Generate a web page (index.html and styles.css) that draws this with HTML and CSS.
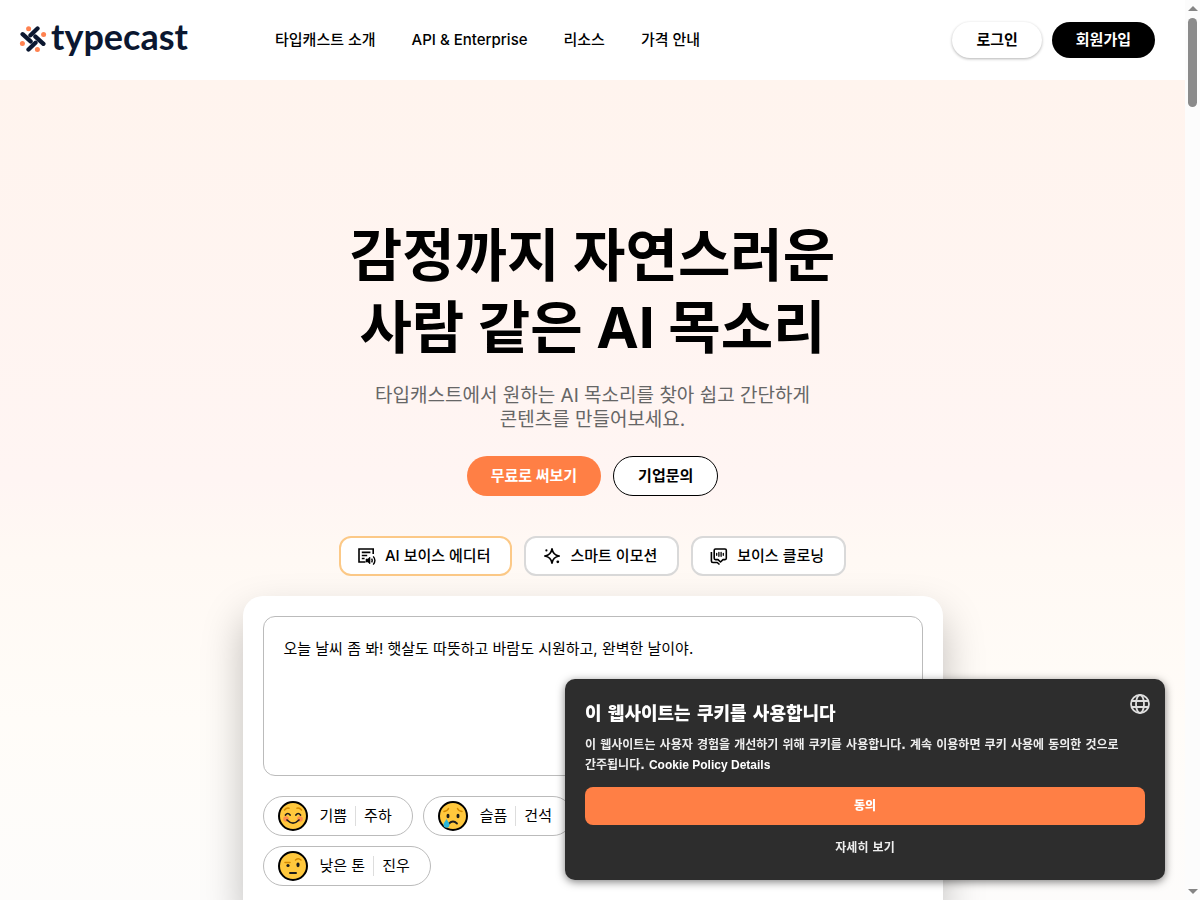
FILE: index.html
```html
<!DOCTYPE html>
<html lang="ko">
<head>
  <meta charset="UTF-8" />
  <meta name="viewport" content="width=device-width, initial-scale=1" />
  <title>typecast</title>
  <link rel="stylesheet" href="styles.css">
</head>
<body>
  <div class="page">
    <header class="header">
      <a class="logo" href="#">
        <svg width="28" height="28" viewBox="0 0 28 28" aria-hidden="true">
          <g stroke="#0b1730" stroke-width="4.3" stroke-linecap="round">
            <path d="M3.6 8.200l8 7.200M18.500 2.500l-7 6.700M16.400 10.600l8 7.200M9.500 23.500l7-6.700"/>
          </g>
          <g fill="#ff8250">
            <circle cx="9.600" cy="2.800" r="2.500"/>
            <circle cx="24.600" cy="8.500" r="2.500"/>
            <circle cx="3.400" cy="17.500" r="2.500"/>
            <circle cx="18.400" cy="23.500" r="2.500"/>
          </g>
        </svg>
        <span>typecast</span>
      </a>
      <nav class="nav">
        <a href="#">타입캐스트 소개</a>
        <a href="#">API &amp; Enterprise</a>
        <a href="#">리소스</a>
        <a href="#">가격 안내</a>
      </nav>
      <div class="account">
        <button class="login">로그인</button>
        <button class="signup">회원가입</button>
      </div>
    </header>

    <main class="hero">
      <h1>감정까지 자연스러운<br>사람 같은 AI 목소리</h1>
      <p class="lead">타입캐스트에서 원하는 AI 목소리를 찾아 쉽고 간단하게<br>콘텐츠를 만들어보세요.</p>
      <div class="actions">
        <button class="primary">무료로 써보기</button>
        <button class="outline">기업문의</button>
      </div>

      <div class="tabs">
        <button class="tab active">
          <svg width="20" height="20" viewBox="0 0 20 20" fill="none" stroke="#000" stroke-width="1.6" aria-hidden="true">
            <path d="M16.200 8V3H2v13h6.500M4.800 6.400h8.600M4.800 9.500h5.400M4.800 12.500h2.800"/>
            <path d="M9 13h1.800l2.200-1.900v6.800L10.800 16H9z" fill="#000" stroke-width=".6"/>
            <path d="M14.600 12.600q1.200 1.900 0 3.800M16.200 10.400q3.400 4.100 0 8.200" stroke-width="1.400"/>
          </svg>
          AI 보이스 에디터
        </button>
        <button class="tab">
          <svg width="20" height="20" viewBox="0 0 20 20" fill="none" stroke="#000" stroke-width="1.7" stroke-linejoin="round" aria-hidden="true">
            <path d="M10 2.800Q11 9 17.200 10 11 11 10 17.200 9 11 2.800 10 9 9 10 2.800z"/>
            <circle cx="4.400" cy="4.400" r="1.100" fill="#000" stroke="none"/>
            <circle cx="15.800" cy="15.800" r="1.400" fill="#000" stroke="none"/>
          </svg>
          스마트 이모션
        </button>
        <button class="tab">
          <svg width="20" height="20" viewBox="0 0 20 20" fill="none" stroke="#000" stroke-width="1.6" stroke-linejoin="round" aria-hidden="true">
            <path d="M6.500 3H16q1.300 0 1.300 1.300v8q0 1.300-1.300 1.300h-2L11.500 16 9 13.600H6.500q-1.300 0-1.300-1.300v-8Q5.200 3 6.500 3z"/>
            <path d="M2.400 6v9q0 1.500 1.500 1.500h4.300l2.300 2"/>
            <path d="M7.700 7.300v2M9.900 6.400v3.900M12.100 6.400v3.900M14.300 7.300v2" stroke-width="1.300" stroke-linecap="round"/>
          </svg>
          보이스 클로닝
        </button>
      </div>

      <section class="editor">
        <textarea class="script" aria-label="대본">오늘 날씨 좀 봐! 햇살도 따뜻하고 바람도 시원하고, 완벽한 날이야.</textarea>
        <div class="voices">
          <button class="voice">
            <svg width="30" height="30" viewBox="0 0 30 30" fill="none" stroke-linecap="round" aria-hidden="true">
              <circle cx="15" cy="15" r="14" fill="#ffc83d" stroke="#000" stroke-width="2"/>
              <circle cx="8" cy="18" r="2.800" fill="#ff8d4d"/>
              <circle cx="22" cy="18" r="2.800" fill="#ff8d4d"/>
              <path d="M6.500 9q2-2.500 4.500-1.800M19 7.200q2.500-.700 4.500 1.800" stroke="#d68a00" stroke-width="1.500"/>
              <path d="M7.500 14q2.300-3 4.600 0M17.900 14q2.300-3 4.600 0M9 19q6 6 12 0" stroke="#1c1c1c" stroke-width="1.700"/>
            </svg>
            <span>기쁨</span><span class="name">주하</span>
          </button>
          <button class="voice">
            <svg width="30" height="30" viewBox="0 0 30 30" fill="none" stroke-linecap="round" aria-hidden="true">
              <circle cx="15" cy="15" r="14" fill="#ffc83d" stroke="#000" stroke-width="2"/>
              <path d="M6 10.500q3.500-.500 4.500-3M19.500 7.500q1 2.500 4.500 3" stroke="#d68a00" stroke-width="1.500"/>
              <ellipse cx="10" cy="15" rx="1.500" ry="2.200" fill="#1c1c1c"/>
              <ellipse cx="20" cy="15" rx="1.500" ry="2.200" fill="#1c1c1c"/>
              <path d="M11 22.500q4-4 8 0" stroke="#1c1c1c" stroke-width="1.800"/>
              <path d="M8.500 18c-1 2.400-3 3.500-3 5.700a3 3 0 0 0 6 0c0-2.200-2-3.300-3-5.700z" fill="#29b6d8"/>
            </svg>
            <span>슬픔</span><span class="name">건석</span>
          </button>
          <button class="voice">
            <svg width="30" height="30" viewBox="0 0 30 30" fill="none" stroke-linecap="round" aria-hidden="true">
              <circle cx="15" cy="15" r="14" fill="#ffc83d" stroke="#000" stroke-width="2"/>
              <path d="M7 11.500h5M17.500 9q3-2.500 5.500 0" stroke="#d68a00" stroke-width="1.500"/>
              <ellipse cx="10" cy="14.500" rx="1.600" ry="1.600" fill="#1c1c1c"/>
              <ellipse cx="20" cy="13.800" rx="1.600" ry="2.400" fill="#1c1c1c"/>
              <path d="M12 22h6" stroke="#1c1c1c" stroke-width="2"/>
            </svg>
            <span>낮은 톤</span><span class="name">진우</span>
          </button>
        </div>
      </section>
    </main>
  </div>

  <div class="scrollbar" aria-hidden="true">
    <span class="arrow up"></span>
    <span class="thumb"></span>
    <span class="arrow down"></span>
  </div>

  <section class="cookie" aria-labelledby="cookie-title">
    <button class="language" aria-label="언어">
      <svg width="20" height="20" viewBox="0 0 20 20" fill="none" stroke="#dedede" stroke-width="1.800" aria-hidden="true">
        <circle cx="10" cy="10" r="9"/>
        <ellipse cx="10" cy="10" rx="4" ry="9"/>
        <path d="M1.500 7h17M1.500 13h17"/>
      </svg>
    </button>
    <h2 id="cookie-title">이 웹사이트는 쿠키를 사용합니다</h2>
    <p>이 웹사이트는 사용자 경험을 개선하기 위해 쿠키를 사용합니다. 계속 이용하면 쿠키 사용에 동의한 것으로 간주됩니다. <a href="#">Cookie Policy Details</a></p>
    <button class="agree">동의</button>
    <button class="details">자세히 보기</button>
  </section>
</body>
</html>
```

FILE: styles.css
```css
* {
  margin: 0;
  padding: 0;
  box-sizing: border-box;
}
body {
  display: flex;
  height: 100vh;
  overflow: hidden;
  font-family: Inter, "Noto Sans CJK KR", sans-serif;
  font-size: 15px;
  line-height: 20px;
  color: #000;
  background: #fff;
}
button {
  border: 0;
  font: inherit;
  color: inherit;
  cursor: pointer;
}
a {
  color: inherit;
  text-decoration: none;
}
.page {
  flex: 1;
  min-width: 0;
}

/* HEADER */
.header {
  display: flex;
  align-items: center;
  height: 80px;
  padding: 0 30px 0 19px;
  background: #fff;
}
.logo {
  display: flex;
  align-items: center;
  gap: 4px;
  width: 256px;
  font: 700 36px/40px Lato, sans-serif;
  color: #0b1730;
}
.logo span {
  padding-bottom: 8px;
}
.nav {
  display: flex;
  gap: 36px;
  font-weight: 500;
}
.account {
  display: flex;
  gap: 10px;
  margin-left: auto;
  font-weight: 700;
}
.account button {
  height: 36px;
  padding: 0 24px;
  border-radius: 18px;
}
.login {
  background: #fff;
  box-shadow: 0 1px 3px rgba(0, 0, 0, 0.3);
}
.signup {
  color: #fff;
  background: #000;
}

/* HERO */
.hero {
  display: flex;
  flex-direction: column;
  align-items: center;
  padding: 140px 20px 0;
  background: linear-gradient(#fff4ee, #fff5f3 400px, #fff9f4 480px, #fffcf8 640px, #fdfcfb 820px);
}
h1 {
  font-size: 57px;
  line-height: 72px;
  font-weight: 700;
  text-align: center;
}
.lead {
  margin-top: 20px;
  font-size: 19px;
  line-height: 24px;
  color: #666;
  text-align: center;
}
.actions {
  display: flex;
  gap: 12px;
  margin-top: 24px;
  font-weight: 700;
}
.actions button {
  height: 40px;
  padding: 0 24px;
  border-radius: 20px;
}
.primary {
  color: #fff;
  background: #ff7f45;
}
.actions .outline {
  border: 1px solid #000;
  background: #fff;
}

/* TABS */
.tabs {
  display: flex;
  gap: 12px;
  margin-top: 40px;
}
.tab {
  display: flex;
  align-items: center;
  gap: 8px;
  height: 40px;
  padding: 0 20px 0 16px;
  border: 2px solid #d9d9d9;
  border-radius: 12px;
  background: #fff;
  font-weight: 500;
}
.tab.active {
  border-color: #fcc987;
}

/* EDITOR */
.editor {
  width: 100%;
  max-width: 700px;
  margin-top: 20px;
  padding: 20px;
  border-radius: 20px 20px 0 0;
  background: #fff;
  box-shadow: 0 20px 40px rgba(0, 0, 0, 0.25);
}
.script {
  display: block;
  width: 100%;
  height: 160px;
  padding: 20px;
  border: 1px solid #bbb;
  border-radius: 12px;
  outline: 0;
  resize: none;
  font: inherit;
  line-height: 24px;
  color: #000;
}
.voices {
  display: flex;
  flex-wrap: wrap;
  gap: 10px;
  max-width: 480px;
  margin-top: 20px;
}
.voice {
  display: flex;
  align-items: center;
  height: 40px;
  padding: 0 20px 0 14px;
  border: 1px solid #bbb;
  border-radius: 20px;
  background: #fff;
}
.voice svg {
  margin-right: 12px;
}
.name {
  margin-left: 8px;
  padding-left: 8px;
  border-left: 1px solid #ddd;
}

/* SCROLLBAR */
.scrollbar {
  display: flex;
  flex-direction: column;
  align-items: center;
  width: 15px;
  padding: 6px 0;
  background: #fcfcfc;
}
.arrow {
  border: 5px solid transparent;
}
.up {
  border-top: 0;
  border-bottom-color: #858585;
}
.down {
  margin-top: auto;
  border-bottom: 0;
  border-top-color: #858585;
}
.thumb {
  width: 9px;
  height: 89px;
  margin-top: 7px;
  border-radius: 5px;
  background: #8b8b8b;
}

/* COOKIE */
.cookie {
  position: fixed;
  right: 35px;
  bottom: 20px;
  width: 600px;
  max-width: calc(100% - 55px);
  padding: 20px 20px 15px;
  border-radius: 10px;
  background: #2d2d2d;
  color: #eee;
  font-family: "DejaVu Sans", "Noto Sans CJK KR", sans-serif;
  font-size: 12px;
  font-weight: 700;
  word-break: keep-all;
  box-shadow: 0 2px 8px rgba(0, 0, 0, 0.5);
}
.cookie h2 {
  font-size: 18px;
  font-weight: 900;
  line-height: 30px;
  color: #fff;
}
.cookie p {
  margin-top: 6px;
  line-height: 20px;
}
.cookie p a {
  font-family: "Liberation Sans", sans-serif;
  color: #fff;
}
.language {
  position: absolute;
  top: 15px;
  right: 15px;
  height: 20px;
  background: none;
}
.agree, .details {
  display: block;
  width: 100%;
}
.agree {
  height: 38px;
  margin-top: 12px;
  border-radius: 8px;
  background: #ff7f45;
  color: #fff;
  font-weight: 900;
}
.details {
  height: 35px;
  margin-top: 5px;
  background: none;
}
```
